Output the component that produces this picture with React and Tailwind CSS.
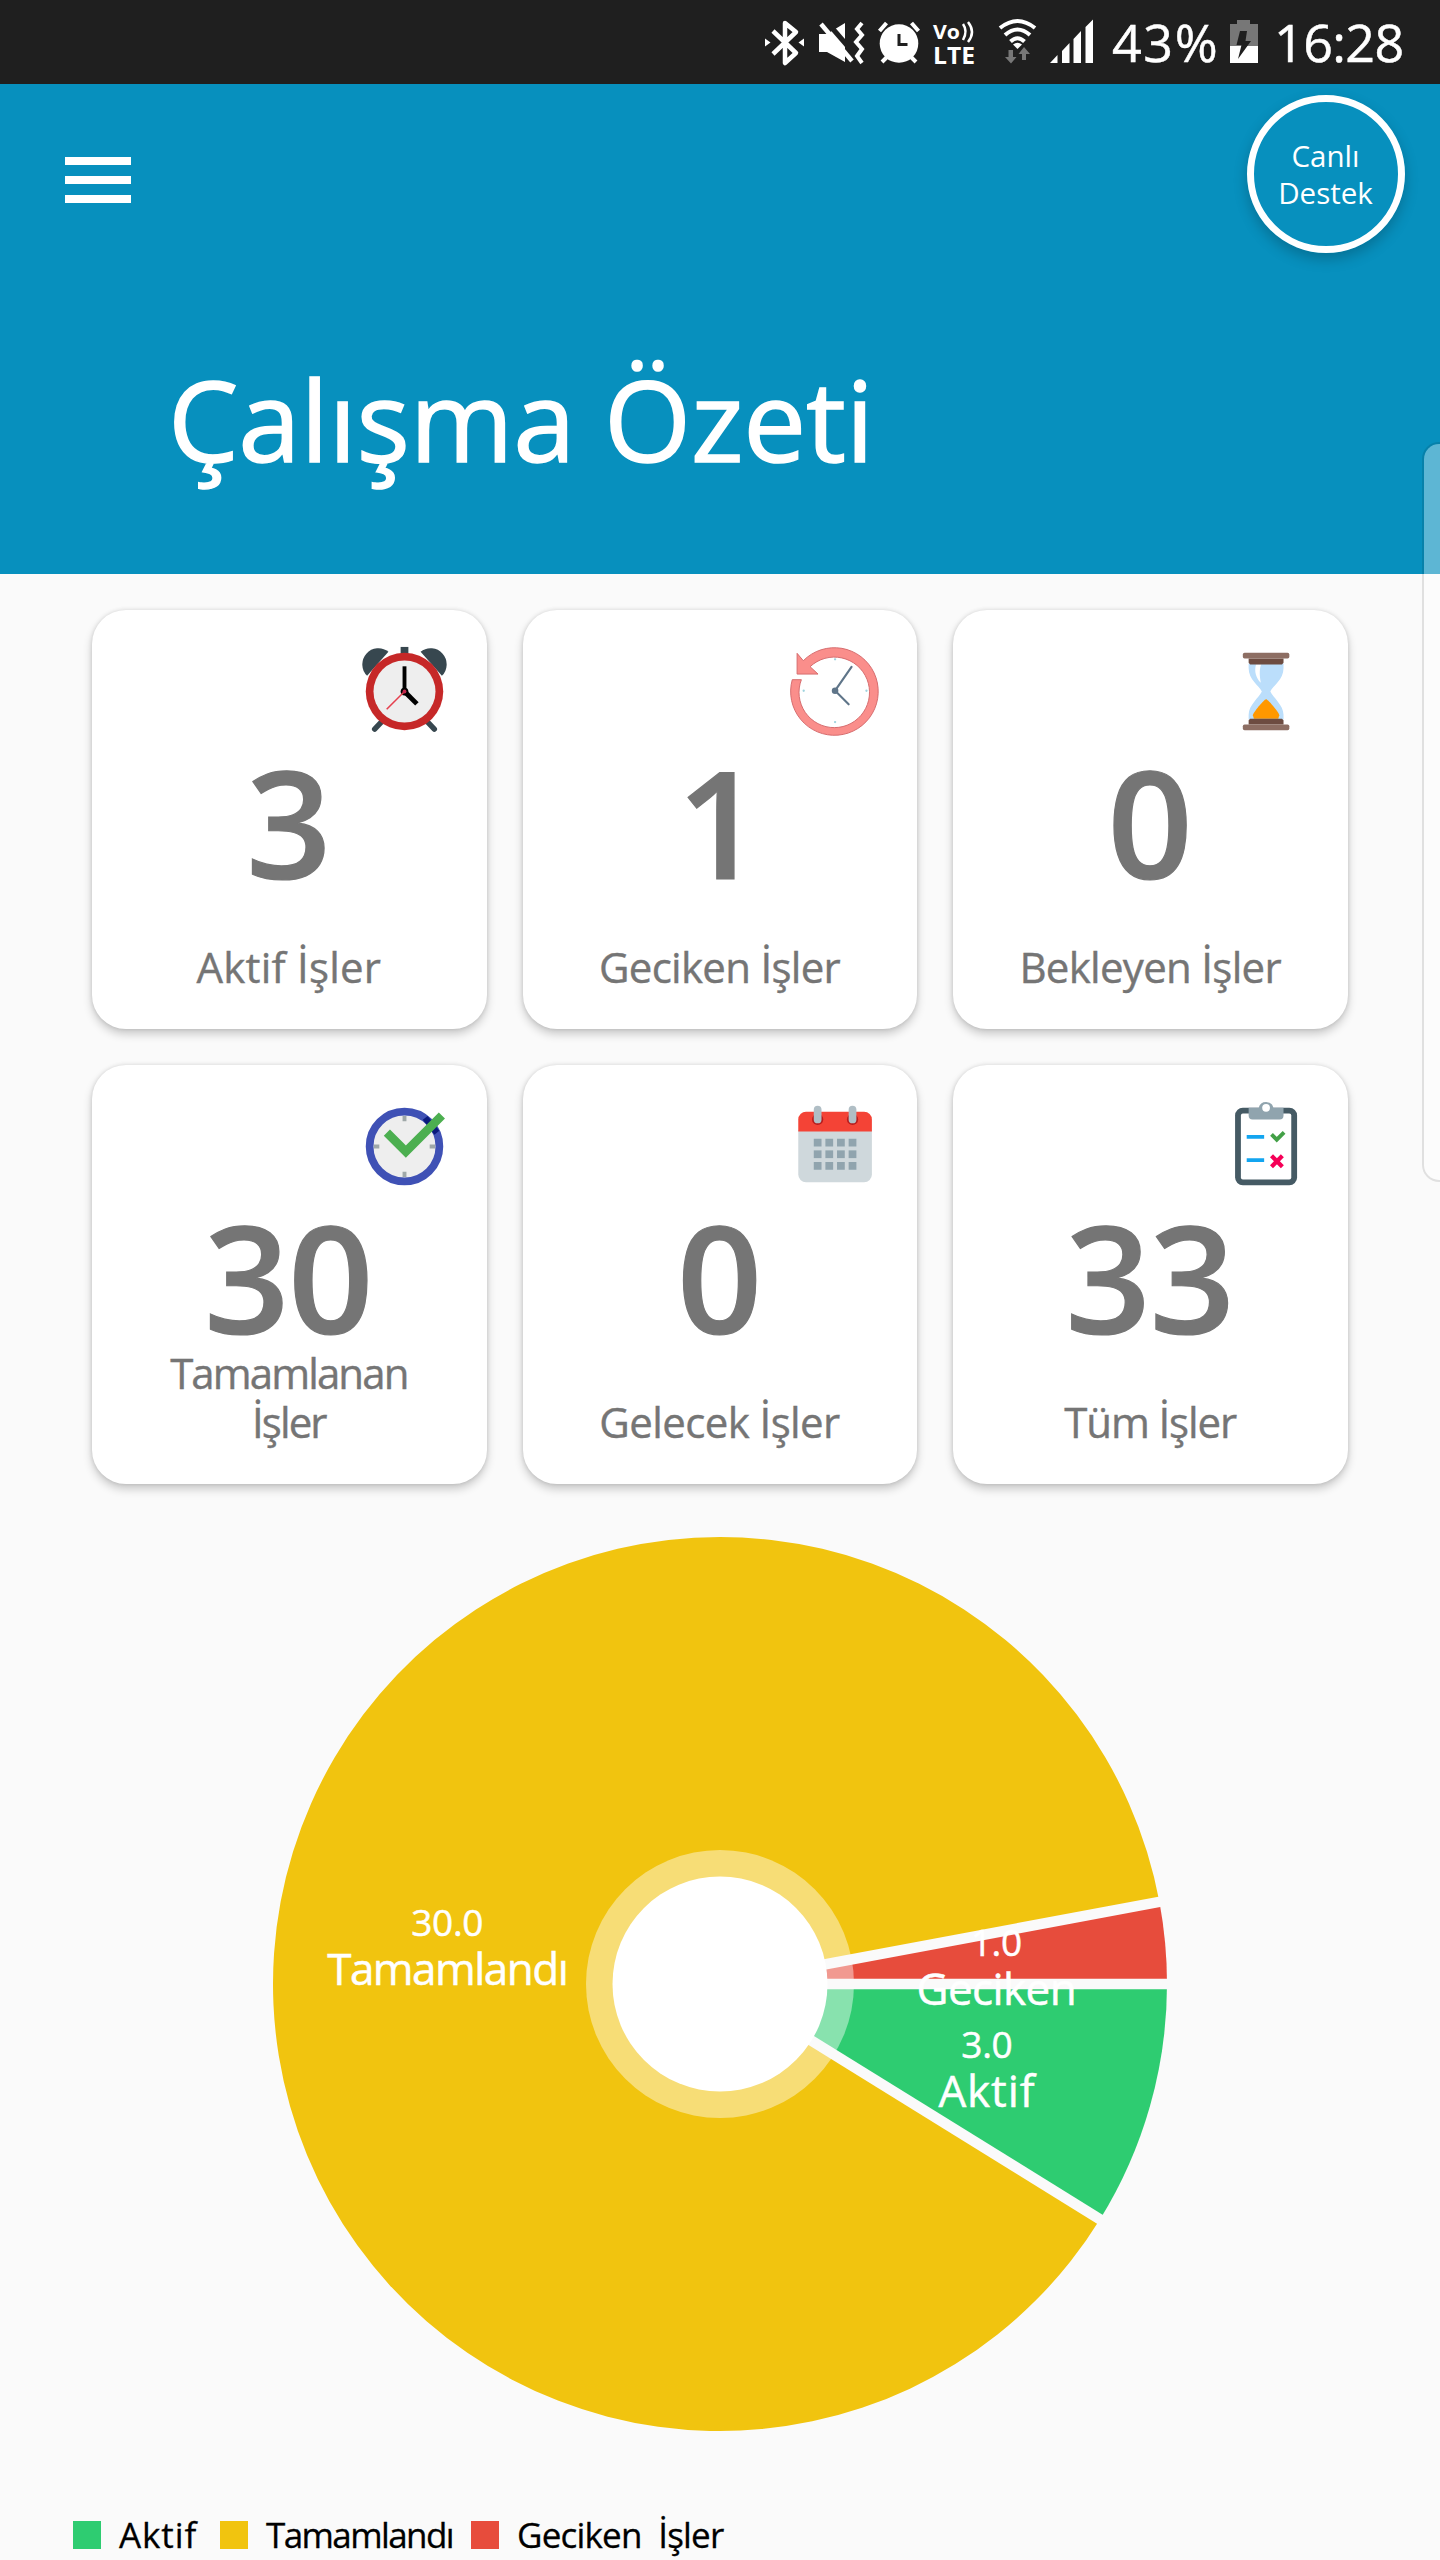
import React from 'react';

const AlarmIcon = () => (
  <svg viewBox="0 0 48 48" className="w-[93px] h-[93px]">
    <path d="M4.7 15.9A8.3 8.3 0 0 1 15.7 3.5Z" fill="#37474f" />
    <path d="M43.3 15.9A8.3 8.3 0 0 0 32.3 3.5Z" fill="#37474f" />
    <rect x="22" y="1" width="4" height="4" fill="#37474f" />
    <path d="M13 38.8L8.6 43.4M35 38.8L39.4 43.4" stroke="#37474f" strokeWidth="2.8" strokeLinecap="round" />
    <circle cx="24" cy="24" r="20" fill="#c62828" />
    <circle cx="24" cy="24" r="16" fill="#eeeeee" />
    <path d="M24 11v13" stroke="#000" strokeWidth="2" />
    <path d="M24 24l6.4 6.4" stroke="#000" strokeWidth="2.5" />
    <circle cx="24" cy="24" r="2" fill="#000" />
    <path d="M24 24l-9.2 9.2" stroke="#e5404f" strokeWidth="0.8" />
    <circle cx="24" cy="24" r="1" fill="#c2264b" />
  </svg>
);

const OverdueIcon = () => (
  <svg viewBox="-0.3 0.4 48 48" className="w-[93px] h-[93px]">
    <path
      d="M7.6 8.5A22.6 22.6 0 1 1 1.9 18.3H6.6A18.2 18.2 0 1 0 11.1 11.6L15.2 15.4H4.4V4.7Z"
      fill="#fa8e8b"
      stroke="#d56a6c"
      strokeWidth="0.5"
    />
    <path d="M32.5 11.7L24 24L31 31" fill="none" stroke="#5f7589" strokeWidth="1.1" strokeLinecap="round" />
    <circle cx="24" cy="24" r="1.7" fill="#5f7589" />
    <g fill="#9fd3de">
      <circle cx="24" cy="7.8" r="0.6" />
      <circle cx="40.2" cy="24" r="0.6" />
      <circle cx="24" cy="40.2" r="0.6" />
      <circle cx="7.8" cy="24" r="0.6" />
    </g>
  </svg>
);

const HourglassIcon = () => (
  <svg viewBox="-0.3 0 48 48" className="w-[93px] h-[93px]">
    <path
      d="M15 9.5V12C15 18 20.5 21 21.8 24C20.5 27 15 31 15 36V38.5H33V36C33 31 27.5 27 26.2 24C27.5 21 33 18 33 12V9.5Z"
      fill="#bbdefb"
    />
    <path d="M18.8 10h2.6C20.3 13.5 20.8 16.2 21.3 19.5C18.7 16.8 17.8 13.5 18.8 10Z" fill="#fff" />
    <path d="M24 28C25 28 30.8 35 30.8 36.2L30.3 38H17.7L17.2 36.2C17.2 35 23 28 24 28Z" fill="#ff9800" />
    <path d="M15 7h18v2.2l-.8.8H15.8L15 9.2ZM15 41h18v-2.2l-.8-.8H15.8L15 38.8Z" fill="#6d4c41" />
    <rect x="12" y="4" width="24" height="3" rx="0.9" fill="#8d6e63" />
    <rect x="12" y="41" width="24" height="3" rx="0.9" fill="#8d6e63" />
  </svg>
);

const DoneIcon = () => (
  <svg viewBox="0 0 48 48" className="w-[93px] h-[93px]">
    <circle cx="24" cy="24" r="18" fill="#eeeeee" stroke="#3f51b5" strokeWidth="4" />
    <path d="M24 8.2v2.8M24 37v2.8M8.2 24h2.8M37 24h2.8" stroke="#9fa8a8" strokeWidth="2" />
    <path d="M34.7 9.2L40.7 16.9" stroke="#0a1a7c" strokeWidth="3.2" />
    <path d="M14.9 16.8L24.7 26.6L43.3 8" fill="none" stroke="#4caf50" strokeWidth="4.5" />
  </svg>
);

const CalendarIcon = () => (
  <svg viewBox="-0.3 0 48 48" className="w-[93px] h-[93px]">
    <path d="M5 15.5H43V38.5a4 4 0 0 1-4 4H9a4 4 0 0 1-4-4Z" fill="#cfd8dc" />
    <path d="M5 16.2V10a4 4 0 0 1 4-4H39a4 4 0 0 1 4 4V16.2Z" fill="#f44336" />
    <circle cx="15" cy="10" r="2.9" fill="#b71c1c" />
    <circle cx="33" cy="10" r="2.9" fill="#b71c1c" />
    <rect x="13" y="3" width="4" height="9" rx="2" fill="#b0bec5" />
    <rect x="31" y="3" width="4" height="9" rx="2" fill="#b0bec5" />
    {[20, 26, 32].map((y) =>
      [13, 19, 25, 31].map((x) => (
        <rect key={`${x}-${y}`} x={x} y={y} width="4" height="4" fill="#90a4ae" />
      ))
    )}
  </svg>
);

const ClipboardIcon = () => (
  <svg viewBox="-0.3 0 48 48" className="w-[93px] h-[93px]">
    <rect x="8" y="4" width="32" height="40" rx="4" fill="#455a64" />
    <rect x="11" y="7" width="26" height="34" rx="1" fill="#fff" />
    <path
      d="M15 4H20.2A3.9 3.9 0 0 1 27.8 4H33V8a2 2 0 0 1-2 2H17a2 2 0 0 1-2-2Z"
      fill="#90a4ae"
    />
    <circle cx="24" cy="4" r="2" fill="#fff" />
    <path d="M14 19h9M14 31h9" stroke="#13a5f0" strokeWidth="2" />
    <path d="M26.8 17.8L29.5 20.5L33.3 16.7" fill="none" stroke="#43a047" strokeWidth="2" />
    <path d="M26.8 28.8l5.6 5.6M32.4 28.8l-5.6 5.6" stroke="#f50057" strokeWidth="2.2" />
  </svg>
);

const cards = [
  { count: 3, label: 'Aktif İşler', icon: AlarmIcon, tracking: 'tracking-[0.2px]' },
  { count: 1, label: 'Geciken İşler', icon: OverdueIcon, tracking: 'tracking-[-0.7px]' },
  { count: 0, label: 'Bekleyen İşler', icon: HourglassIcon, tracking: 'tracking-[-0.7px]' },
  { count: 30, label: 'Tamamlanan İşler', icon: DoneIcon, tracking: 'tracking-[-1.9px]' },
  { count: 0, label: 'Gelecek İşler', icon: CalendarIcon, tracking: 'tracking-[-0.6px]' },
  { count: 33, label: 'Tüm İşler', icon: ClipboardIcon, tracking: 'tracking-[-1.1px]' },
];

const slices = [
  { name: 'Aktif', value: 3, color: '#2ecc71', spacing: 0.9, dy: 1 },
  { name: 'Tamamlandı', value: 30, color: '#f1c40f', spacing: -1.5, dy: 5 },
  { name: 'Geciken', value: 1, color: '#e74c3c', spacing: -0.6, dy: 0 },
];

const StatusBar = () => (
  <div className="h-[84px] bg-[#1f1f1f] text-white flex items-center pl-[764px] leading-none">
    <svg viewBox="0 0 334 84" className="w-[334px] h-[84px] shrink-0" fill="#fff">
      {/* bluetooth */}
      <path d="M9 31L32 53L21 63V23L32 32L9 54" fill="none" stroke="#fff" strokeWidth="4.5" strokeLinejoin="round" />
      <path d="M1 38.5L6.5 42.5L1 46.5ZM40 38.5L34.5 42.5L40 46.5Z" />
      {/* muted, vibrating */}
      <path d="M55 34H63L81 23V62L63 52H55Z" />
      <path d="M62 21L94 58" stroke="#1f1f1f" strokeWidth="5" />
      <path d="M57 24L88 61" stroke="#fff" strokeWidth="4.5" />
      <path d="M98 23L93 29L98 35L92 42L98 49L93 56L98 63" fill="none" stroke="#fff" strokeWidth="4" />
      {/* alarm */}
      <circle cx="135" cy="43.5" r="19.3" />
      <path d="M115.5 31L122.5 23M154.5 31L147.5 23M124 56L118 62M146 56L152 62" stroke="#fff" strokeWidth="4" />
      <path d="M135 34V44.5H143.5" fill="none" stroke="#1f1f1f" strokeWidth="3" />
      {/* volte */}
      <text x="169" y="38.5" fontSize="20" fontWeight="700" textLength="27" lengthAdjust="spacingAndGlyphs">Vo</text>
      <text x="169" y="63.5" fontSize="23.5" fontWeight="700" textLength="42" lengthAdjust="spacingAndGlyphs">LTE</text>
      <path d="M199 24Q204 31 199 40M204 22Q212 32 204 42" fill="none" stroke="#fff" strokeWidth="2.5" />
      {/* wifi */}
      <g fill="none" stroke="#fff" strokeWidth="4">
        <path d="M236 28Q253.5 14 271 28" />
        <path d="M241 35Q253.5 24 266 35" />
        <path d="M246.5 41.5Q253.5 35 260.5 41.5" />
      </g>
      <path d="M249 44.5Q253.5 41 258 44.5L253.5 49Z" />
      <path d="M244.5 50V57H241L247 63.5L252.5 57H249V50ZM262 60V54H266L260 47L254.5 54H258V60Z" fill="#777" />
      {/* signal */}
      <path d="M286 63L293.5 55V63ZM298 51L305.5 43V63H298ZM309.5 39L317 31V63H309.5ZM321.5 27L329 19.5V63H321.5Z" />
    </svg>
    <span className="w-[131px] pl-[14px] text-[52px] tracking-[1.6px] [-webkit-text-stroke:0.5px_currentColor]">43%</span>
    <svg viewBox="0 0 30 84" className="w-[30px] h-[84px] shrink-0">
      <path d="M8 20H21V24H29V63H1V24H8Z" fill="#777" />
      <rect x="1" y="46" width="28" height="17" fill="#fff" />
      <path d="M11 31H18L16.5 41H22L9 59L12.5 45H7.5Z" fill="#1f1f1f" />
    </svg>
    <span className="pl-[15px] text-[52px] tracking-[-0.6px] [-webkit-text-stroke:0.5px_currentColor]">16:28</span>
  </div>
);

const Header = () => (
  <header className="h-[490px] bg-[#0790be] text-white">
    <div className="flex justify-between items-start pt-[11px] pl-[65px] pr-[35px]">
      <button className="mt-[62px] flex flex-col gap-[11px]">
        <span className="block w-[66px] h-2 bg-white" />
        <span className="block w-[66px] h-2 bg-white" />
        <span className="block w-[66px] h-2 bg-white" />
      </button>
      <button className="w-[158px] h-[158px] rounded-full border-[7px] border-white flex items-center justify-center text-center pr-px text-[29.5px] leading-[37px] shadow-[0_6px_14px_rgba(0,0,0,0.22)]">
        Canlı<br />Destek
      </button>
    </div>
    <h1 className="mt-[96px] pl-[168px] text-[112px] leading-[140px] tracking-[-0.2px] [-webkit-text-stroke:1.5px_currentColor]">
      Çalışma Özeti
    </h1>
  </header>
);

const SummaryCard = ({ count, label, icon: Icon, tracking }) => (
  <div className="h-[419px] rounded-[34px] bg-white flex flex-col pt-[35px] pb-[38px] text-[#757575] shadow-[0_5px_10px_rgba(0,0,0,0.2),0_0_4px_rgba(0,0,0,0.12)]">
    <div className="flex justify-end pr-9">
      <Icon />
    </div>
    <div className="mt-[14px] pr-[2px] text-center text-[149px] leading-[140px] font-semibold tracking-[-1px] [-webkit-text-stroke:1.2px_currentColor]">
      {count}
    </div>
    <div className={`mt-auto pl-12 pr-[49px] text-center text-[42px] leading-[49px] [-webkit-text-stroke:0.4px_currentColor] ${tracking}`}>
      {label}
    </div>
  </div>
);

const RADIUS = 447;
const HOLE = 107.5;
const RING = 134;
const LABEL_RADIUS = 277.5;

const point = (radius, angle) => [radius * Math.cos(angle), radius * Math.sin(angle)];

const PieChart = () => {
  const total = slices.reduce((sum, s) => sum + s.value, 0);
  let start = 0;
  const parts = slices.map((s) => {
    const end = start + (s.value / total) * Math.PI * 2;
    const part = { ...s, start, end, mid: (start + end) / 2 };
    start = end;
    return part;
  });

  return (
    <svg viewBox="-720 -500 1440 1026" className="block w-full h-[1026px]">
      {parts.map((p) => {
        const [x1, y1] = point(RADIUS, p.start);
        const [x2, y2] = point(RADIUS, p.end);
        const large = p.end - p.start > Math.PI ? 1 : 0;
        return (
          <path key={p.name} d={`M0 0L${x1} ${y1}A${RADIUS} ${RADIUS} 0 ${large} 1 ${x2} ${y2}Z`} fill={p.color} />
        );
      })}
      <circle r={RING} fill="#fff" fillOpacity="0.43" />
      {parts.map((p) => {
        const [x, y] = point(RADIUS + 4, p.start);
        return <line key={p.name} x1="0" y1="0" x2={x} y2={y} stroke="#fafafa" strokeWidth="10.5" />;
      })}
      <circle r={HOLE} fill="#fff" />
      {parts.map((p) => {
        const [x, y] = point(LABEL_RADIUS, p.mid);
        return (
          <g key={p.name} fill="#fff" stroke="#fff" strokeWidth="0.5" textAnchor="middle">
            <text x={x} y={y + p.dy - 2.5} fontSize="37" letterSpacing="-0.3">{p.value.toFixed(1)}</text>
            <text x={x} y={y + p.dy + 46.5} fontSize="44" letterSpacing={p.spacing}>{p.name}</text>
          </g>
        );
      })}
    </svg>
  );
};

const Legend = () => (
  <div className="h-[50px] flex items-center pl-[73px] text-[35px] leading-[52px] text-black whitespace-pre [-webkit-text-stroke:0.3px_currentColor]">
    <span className="w-7 h-7 bg-[#2ecc71]" />
    <span className="w-[119px] pl-[18px] tracking-[0.9px]">Aktif</span>
    <span className="w-7 h-7 bg-[#f1c40f]" />
    <span className="w-[223px] pl-[18px] tracking-[-1.6px]">Tamamlandı</span>
    <span className="w-7 h-7 bg-[#e74c3c]" />
    <span className="pl-[18px] tracking-[-0.8px]">{'Geciken  İşler'}</span>
  </div>
);

const App = () => {
  return (
    <div className="relative w-[1440px] h-[2560px] overflow-hidden bg-[#fafafa] font-['Open_Sans','Noto_Sans',sans-serif]">
      <StatusBar />
      <Header />
      <main>
        <div className="grid grid-cols-3 gap-9 px-[92px] pt-9">
          {cards.map((card) => (
            <SummaryCard key={card.label} {...card} />
          ))}
        </div>
        <PieChart />
        <Legend />
      </main>
      {/* edge panel handle */}
      <div className="absolute right-0 top-[442px] w-[18px] h-[740px] rounded-l-[17px] border-2 border-r-0 border-black/10 bg-white/35 bg-clip-padding" />
    </div>
  );
};

export default App;
